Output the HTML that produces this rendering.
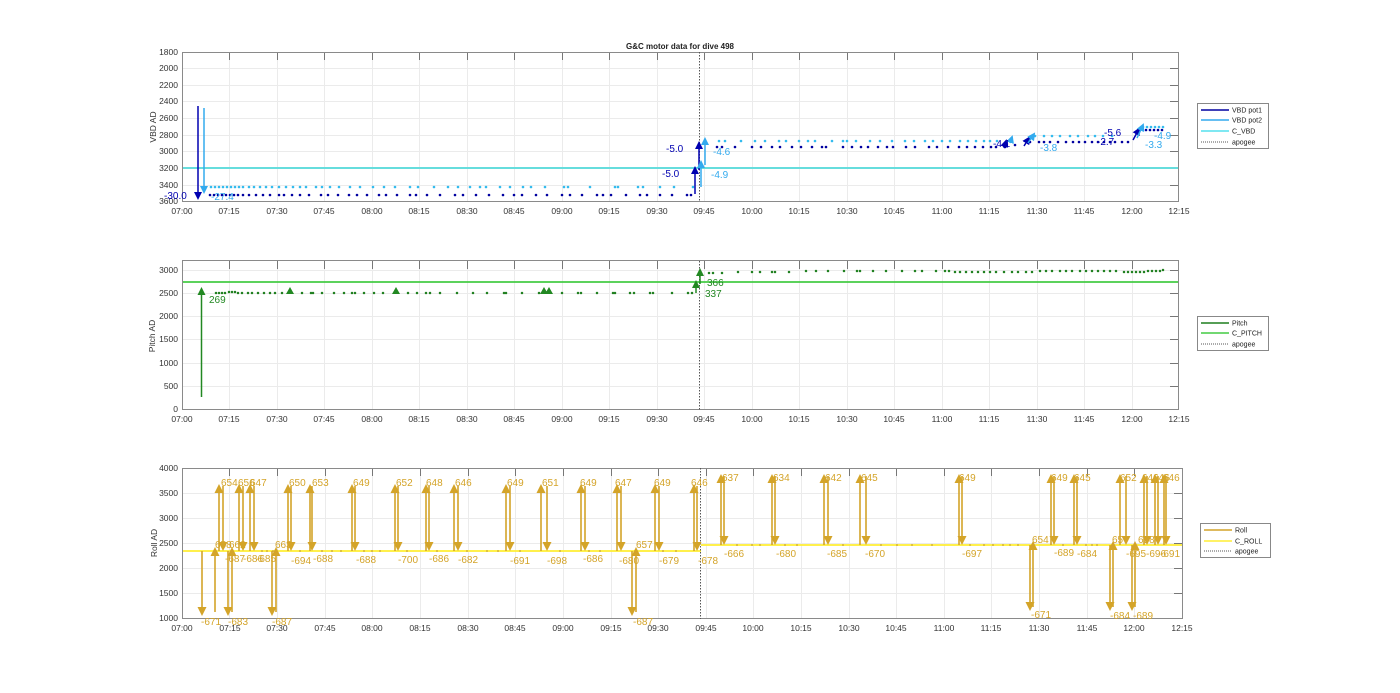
<!DOCTYPE html>
<html><head><meta charset="utf-8"><style>
html,body{margin:0;padding:0;background:#fff;width:1400px;height:693px;overflow:hidden}
svg{display:block;font-family:"Liberation Sans",sans-serif}
.t{font-size:8.5px;fill:#333}
.g{stroke:#ebebeb;stroke-width:1}
.bx{fill:none;stroke:#8a8a8a;stroke-width:1}
.tk{stroke:#777;stroke-width:1;fill:none}
</style></head><body>
<svg width="1400" height="693" viewBox="0 0 1400 693" xmlns="http://www.w3.org/2000/svg">
<defs>
<marker id="ab" markerWidth="8" markerHeight="8" refX="6" refY="4" orient="auto" markerUnits="userSpaceOnUse"><path d="M0,0 L8,4 L0,8 z" fill="#0000b0"/></marker>
<marker id="al" markerWidth="8" markerHeight="8" refX="6" refY="4" orient="auto" markerUnits="userSpaceOnUse"><path d="M0,0 L8,4 L0,8 z" fill="#33aaee"/></marker>
<marker id="ag" markerWidth="8" markerHeight="8" refX="6" refY="4" orient="auto" markerUnits="userSpaceOnUse"><path d="M0,0 L8,4 L0,8 z" fill="#228822"/></marker>
<marker id="ar" markerWidth="9" markerHeight="9" refX="7" refY="4.5" orient="auto" markerUnits="userSpaceOnUse"><path d="M0,0 L9,4.5 L0,9 z" fill="#d4a429"/></marker>
</defs>

<!-- ===== TOP PLOT ===== -->
<text x="680" y="49" text-anchor="middle" style="font-size:8px;font-weight:bold" fill="#222">G&amp;C motor data for dive 498</text>
<g class="g">
<path d="M229.5 52V202M277.5 52V202M324.5 52V202M372.5 52V202M419.5 52V202M467.5 52V202M514.5 52V202M562.5 52V202M609.5 52V202M657.5 52V202M704.5 52V202M752.5 52V202M799.5 52V202M847.5 52V202M894.5 52V202M942.5 52V202M989.5 52V202M1037.5 52V202M1084.5 52V202M1132.5 52V202"/>
<path d="M182 68.5H1179M182 85.5H1179M182 101.5H1179M182 118.5H1179M182 135.5H1179M182 151.5H1179M182 168.5H1179M182 185.5H1179"/>
</g>
<path class="tk" d="M229.5 52v8M277.5 52v8M324.5 52v8M372.5 52v8M419.5 52v8M467.5 52v8M514.5 52v8M562.5 52v8M609.5 52v8M657.5 52v8M704.5 52v8M752.5 52v8M799.5 52v8M847.5 52v8M894.5 52v8M942.5 52v8M989.5 52v8M1037.5 52v8M1084.5 52v8M1132.5 52v8M1170 68.5h9M1170 85.5h9M1170 101.5h9M1170 118.5h9M1170 135.5h9M1170 151.5h9M1170 168.5h9M1170 185.5h9"/>
<line x1="182" y1="168" x2="1179" y2="168" stroke="#66dddd" stroke-width="2"/>
<rect class="bx" x="182.5" y="52.5" width="996" height="149"/>
<g class="t" text-anchor="end">
<text x="178" y="55">1800</text><text x="178" y="71">2000</text><text x="178" y="88">2200</text><text x="178" y="104">2400</text><text x="178" y="121">2600</text><text x="178" y="138">2800</text><text x="178" y="154">3000</text><text x="178" y="171">3200</text><text x="178" y="188">3400</text><text x="178" y="204">3600</text>
</g>
<text class="t" transform="translate(156,127) rotate(-90)" text-anchor="middle">VBD AD</text>
<g class="t" text-anchor="middle">
<text x="182" y="214">07:00</text><text x="229" y="214">07:15</text><text x="277" y="214">07:30</text><text x="324" y="214">07:45</text><text x="372" y="214">08:00</text><text x="419" y="214">08:15</text><text x="467" y="214">08:30</text><text x="514" y="214">08:45</text><text x="562" y="214">09:00</text><text x="609" y="214">09:15</text><text x="657" y="214">09:30</text><text x="704" y="214">09:45</text><text x="752" y="214">10:00</text><text x="799" y="214">10:15</text><text x="847" y="214">10:30</text><text x="894" y="214">10:45</text><text x="942" y="214">11:00</text><text x="989" y="214">11:15</text><text x="1037" y="214">11:30</text><text x="1084" y="214">11:45</text><text x="1132" y="214">12:00</text><text x="1179" y="214">12:15</text>
</g>
<path stroke="#33bbee" stroke-width="2.6" stroke-linecap="round" fill="none" d="M211 187h0M215 187h0M219 187h0M223 187h0M227 187h0M231 187h0M235 187h0M239 187h0M243 187h0M249 187h0M254 187h0M260 187h0M266 187h0M272 187h0M279 187h0M286 187h0M293 187h0M300 187h0M306 187h0M316 187h0M322 187h0M330 187h0M339 187h0M350 187h0M360 187h0M373 187h0M384 187h0M395 187h0M410 187h0M418 187h0M434 187h0M448 187h0M458 187h0M470 187h0M480 187h0M486 187h0M500 187h0M510 187h0M523 187h0M531 187h0M545 187h0M564 187h0M568 187h0M590 187h0M615 187h0M618 187h0M638 187h0M643 187h0M660 187h0M674 187h0M693 187h0M719 141h0M725 141h0M741 141h0M755 141h0M765 141h0M779 141h0M786 141h0M799 141h0M808 141h0M815 141h0M832 141h0M843 141h0M847 141h0M856 141h0M870 141h0M880 141h0M892 141h0M905 141h0M914 141h0M925 141h0M933 141h0M942 141h0M950 141h0M960 141h0M968 141h0M976 141h0M984 141h0M990 141h0M997 141h0M1010 141h0M1035 136h0M1044 136h0M1052 136h0M1060 136h0M1070 136h0M1078 136h0M1088 136h0M1095 136h0M1103 136h0M1112 136h0M1143 127h0M1147 127h0M1151 127h0M1155 127h0M1159 127h0M1163 127h0"/>
<path stroke="#0000a0" stroke-width="2.6" stroke-linecap="round" fill="none" d="M210 195h0M214 195h0M218 195h0M222 195h0M226 195h0M230 195h0M234 195h0M238 195h0M243 195h0M249 195h0M256 195h0M263 195h0M270 195h0M279 195h0M284 195h0M292 195h0M300 195h0M309 195h0M321 195h0M328 195h0M338 195h0M349 195h0M357 195h0M367 195h0M379 195h0M386 195h0M397 195h0M410 195h0M416 195h0M427 195h0M440 195h0M455 195h0M463 195h0M476 195h0M489 195h0M503 195h0M514 195h0M522 195h0M536 195h0M547 195h0M562 195h0M570 195h0M582 195h0M597 195h0M603 195h0M611 195h0M626 195h0M640 195h0M647 195h0M660 195h0M672 195h0M687 195h0M691 195h0M717 147h0M722 147h0M735 147h0M752 147h0M761 147h0M772 147h0M780 147h0M792 147h0M801 147h0M812 147h0M822 147h0M826 147h0M843 147h0M852 147h0M861 147h0M868 147h0M878 147h0M887 147h0M893 147h0M906 147h0M915 147h0M929 147h0M937 147h0M948 147h0M959 147h0M967 147h0M975 147h0M983 147h0M991 147h0M996 147h0M1005 147h0M1015 145h0M1030 142h0M1039 142h0M1044 142h0M1050 142h0M1058 142h0M1066 142h0M1073 142h0M1079 142h0M1085 142h0M1092 142h0M1098 142h0M1104 142h0M1110 142h0M1115 142h0M1122 142h0M1128 142h0M1146 130h0M1150 130h0M1154 130h0M1158 130h0M1162 130h0"/>
<line x1="699.5" y1="52" x2="699.5" y2="202" stroke="#555" stroke-dasharray="1.5,1.5"/>
<line x1="198" y1="106" x2="198" y2="198" stroke="#0000b0" stroke-width="1.5" marker-end="url(#ab)"/>
<line x1="204" y1="108" x2="204" y2="192" stroke="#33aaee" stroke-width="1.5" marker-end="url(#al)"/>
<line x1="695" y1="194" x2="695" y2="168" stroke="#0000b0" stroke-width="1.5" marker-end="url(#ab)"/>
<line x1="699" y1="170" x2="699" y2="143" stroke="#0000b0" stroke-width="1.5" marker-end="url(#ab)"/>
<line x1="701" y1="187" x2="701" y2="162" stroke="#33aaee" stroke-width="1.5" marker-end="url(#al)"/>
<line x1="705" y1="165" x2="705" y2="139" stroke="#33aaee" stroke-width="1.5" marker-end="url(#al)"/>
<line x1="1004" y1="148" x2="1006" y2="141" stroke="#0000b0" stroke-width="1.5" marker-end="url(#ab)"/>
<line x1="1024" y1="146" x2="1029" y2="138" stroke="#0000b0" stroke-width="1.5" marker-end="url(#ab)"/>
<line x1="1028" y1="143" x2="1034" y2="134" stroke="#33aaee" stroke-width="1.5" marker-end="url(#al)"/>
<line x1="1010" y1="143" x2="1012" y2="137" stroke="#33aaee" stroke-width="1.5" marker-end="url(#al)"/>
<line x1="1133" y1="140" x2="1139" y2="129" stroke="#0000b0" stroke-width="1.5" marker-end="url(#ab)"/>
<line x1="1137" y1="138" x2="1143" y2="125" stroke="#33aaee" stroke-width="1.5" marker-end="url(#al)"/>
<g style="font-size:10px">
<text x="164" y="199" fill="#0000b0">-30.0</text><text x="211" y="200" fill="#33aaee">-27.4</text>
<text x="666" y="152" fill="#0000b0">-5.0</text><text x="662" y="177" fill="#0000b0">-5.0</text>
<text x="713" y="155" fill="#33aaee">-4.6</text><text x="711" y="178" fill="#33aaee">-4.9</text>
<text x="993" y="147" fill="#0000b0">-4.1</text><text x="1040" y="151" fill="#33aaee">-3.8</text>
<text x="1104" y="136" fill="#0000b0">-5.6</text><text x="1097" y="145" fill="#0000b0">-2.7</text>
<text x="1154" y="139" fill="#33aaee">-4.9</text><text x="1145" y="148" fill="#33aaee">-3.3</text>
</g>
<rect x="1197.5" y="103.5" width="71" height="45" fill="#fff" stroke="#888"/>
<g style="font-size:7px" fill="#222">
<line x1="1201" y1="110" x2="1229" y2="110" stroke="#0000a0" stroke-width="1.6"/><text x="1232" y="112.5">VBD pot1</text>
<line x1="1201" y1="120" x2="1229" y2="120" stroke="#33aaee" stroke-width="1.6"/><text x="1232" y="122.5">VBD pot2</text>
<line x1="1201" y1="131" x2="1229" y2="131" stroke="#55e0ee" stroke-width="1.6"/><text x="1232" y="133.5">C_VBD</text>
<line x1="1201" y1="142" x2="1229" y2="142" stroke="#555" stroke-dasharray="1,1"/><text x="1232" y="144.5">apogee</text>
</g>

<!-- ===== MIDDLE PLOT ===== -->
<g class="g">
<path d="M229.5 261V410M277.5 261V410M324.5 261V410M372.5 261V410M419.5 261V410M467.5 261V410M514.5 261V410M562.5 261V410M609.5 261V410M657.5 261V410M704.5 261V410M752.5 261V410M799.5 261V410M847.5 261V410M894.5 261V410M942.5 261V410M989.5 261V410M1037.5 261V410M1084.5 261V410M1132.5 261V410"/>
<path d="M182 270.5H1179M182 293.5H1179M182 316.5H1179M182 339.5H1179M182 363.5H1179M182 386.5H1179"/>
</g>
<path class="tk" d="M229.5 261v8M277.5 261v8M324.5 261v8M372.5 261v8M419.5 261v8M467.5 261v8M514.5 261v8M562.5 261v8M609.5 261v8M657.5 261v8M704.5 261v8M752.5 261v8M799.5 261v8M847.5 261v8M894.5 261v8M942.5 261v8M989.5 261v8M1037.5 261v8M1084.5 261v8M1132.5 261v8M1170 270.5h9M1170 293.5h9M1170 316.5h9M1170 339.5h9M1170 363.5h9M1170 386.5h9"/>
<line x1="182" y1="282" x2="1179" y2="282" stroke="#44cc44" stroke-width="1.8"/>
<rect class="bx" x="182.5" y="260.5" width="996" height="149"/>
<g class="t" text-anchor="end">
<text x="178" y="273">3000</text><text x="178" y="296">2500</text><text x="178" y="319">2000</text><text x="178" y="342">1500</text><text x="178" y="366">1000</text><text x="178" y="389">500</text><text x="178" y="412">0</text>
</g>
<text class="t" transform="translate(155,336) rotate(-90)" text-anchor="middle">Pitch AD</text>
<g class="t" text-anchor="middle">
<text x="182" y="422">07:00</text><text x="229" y="422">07:15</text><text x="277" y="422">07:30</text><text x="324" y="422">07:45</text><text x="372" y="422">08:00</text><text x="419" y="422">08:15</text><text x="467" y="422">08:30</text><text x="514" y="422">08:45</text><text x="562" y="422">09:00</text><text x="609" y="422">09:15</text><text x="657" y="422">09:30</text><text x="704" y="422">09:45</text><text x="752" y="422">10:00</text><text x="799" y="422">10:15</text><text x="847" y="422">10:30</text><text x="894" y="422">10:45</text><text x="942" y="422">11:00</text><text x="989" y="422">11:15</text><text x="1037" y="422">11:30</text><text x="1084" y="422">11:45</text><text x="1132" y="422">12:00</text><text x="1179" y="422">12:15</text>
</g>
<path stroke="#1f7f1f" stroke-width="2.5" stroke-linecap="round" fill="none" d="M216 293h0M219 293h0M222 293h0M225 293h0M229 292h0M232 292h0M235 292h0M238 293h0M242 293h0M248 293h0M252 293h0M258 293h0M264 293h0M270 293h0M275 293h0M282 293h0M302 293h0M311 293h0M313 293h0M322 293h0M334 293h0M344 293h0M352 293h0M355 293h0M364 293h0M374 293h0M383 293h0M408 293h0M417 293h0M426 293h0M430 293h0M440 293h0M457 293h0M473 293h0M487 293h0M504 293h0M506 293h0M522 293h0M539 293h0M562 293h0M578 293h0M581 293h0M597 293h0M613 293h0M615 293h0M630 293h0M634 293h0M650 293h0M653 293h0M672 293h0M688 293h0M692 293h0M709 273h0M713 273h0M722 273h0M738 272h0M752 272h0M760 272h0M772 272h0M775 272h0M789 272h0M806 271h0M816 271h0M828 271h0M844 271h0M857 271h0M860 271h0M873 271h0M886 271h0M902 271h0M915 271h0M922 271h0M936 271h0M945 271h0M949 271h0M955 272h0M960 272h0M966 272h0M972 272h0M978 272h0M984 272h0M990 272h0M996 272h0M1004 272h0M1012 272h0M1018 272h0M1026 272h0M1032 272h0M1040 271h0M1046 271h0M1052 271h0M1060 271h0M1066 271h0M1072 271h0M1080 271h0M1086 271h0M1092 271h0M1098 271h0M1104 271h0M1110 271h0M1116 271h0M1124 272h0M1128 272h0M1132 272h0M1136 272h0M1140 272h0M1144 272h0M1148 271h0M1152 271h0M1156 271h0M1160 271h0M1163 270h0"/>
<line x1="699.5" y1="261" x2="699.5" y2="410" stroke="#555" stroke-dasharray="1.5,1.5"/>
<line x1="201.5" y1="397" x2="201.5" y2="289" stroke="#228822" stroke-width="1.5" marker-end="url(#ag)"/>
<line x1="696" y1="293" x2="696" y2="282" stroke="#228822" stroke-width="1.5" marker-end="url(#ag)"/>
<line x1="700" y1="284" x2="700" y2="270" stroke="#228822" stroke-width="1.5" marker-end="url(#ag)"/>
<path fill="#228822" d="M286 294l4-7 4 7zM392 294l4-7 4 7zM540 294l4-7 4 7zM545 294l4-7 4 7z"/>
<g style="font-size:10px" fill="#228822">
<text x="209" y="303">269</text><text x="707" y="286">366</text><text x="705" y="297">337</text>
</g>
<rect x="1197.5" y="316.5" width="71" height="34" fill="#fff" stroke="#888"/>
<g style="font-size:7px" fill="#222">
<line x1="1201" y1="323" x2="1229" y2="323" stroke="#1f7f1f" stroke-width="1.6"/><text x="1232" y="325.5">Pitch</text>
<line x1="1201" y1="333" x2="1229" y2="333" stroke="#44cc44" stroke-width="1.6"/><text x="1232" y="335.5">C_PITCH</text>
<line x1="1201" y1="344" x2="1229" y2="344" stroke="#555" stroke-dasharray="1,1"/><text x="1232" y="346.5">apogee</text>
</g>

<!-- ===== BOTTOM PLOT ===== -->
<g class="g">
<path d="M229.5 468V619M277.5 468V619M325.5 468V619M372.5 468V619M420.5 468V619M468.5 468V619M515.5 468V619M563.5 468V619M611.5 468V619M658.5 468V619M706.5 468V619M753.5 468V619M801.5 468V619M849.5 468V619M896.5 468V619M944.5 468V619M991.5 468V619M1039.5 468V619M1087.5 468V619M1134.5 468V619"/>
<path d="M182 493.5H1183M182 518.5H1183M182 543.5H1183M182 568.5H1183M182 593.5H1183"/>
</g>
<path class="tk" d="M229.5 468v8M277.5 468v8M325.5 468v8M372.5 468v8M420.5 468v8M468.5 468v8M515.5 468v8M563.5 468v8M611.5 468v8M658.5 468v8M706.5 468v8M753.5 468v8M801.5 468v8M849.5 468v8M896.5 468v8M944.5 468v8M991.5 468v8M1039.5 468v8M1087.5 468v8M1134.5 468v8M1174 493.5h9M1174 518.5h9M1174 543.5h9M1174 568.5h9M1174 593.5h9"/>
<line x1="182" y1="551" x2="701" y2="551" stroke="#ffee33" stroke-width="1.8"/>
<line x1="701" y1="545" x2="1183" y2="545" stroke="#ffee33" stroke-width="1.8"/>
<rect class="bx" x="182.5" y="468.5" width="1000" height="150"/>
<g class="t" text-anchor="end">
<text x="178" y="471">4000</text><text x="178" y="496">3500</text><text x="178" y="521">3000</text><text x="178" y="546">2500</text><text x="178" y="571">2000</text><text x="178" y="596">1500</text><text x="178" y="621">1000</text>
</g>
<text class="t" transform="translate(157,543) rotate(-90)" text-anchor="middle">Roll AD</text>
<g class="t" text-anchor="middle">
<text x="182" y="631">07:00</text><text x="230" y="631">07:15</text><text x="277" y="631">07:30</text><text x="325" y="631">07:45</text><text x="372" y="631">08:00</text><text x="420" y="631">08:15</text><text x="468" y="631">08:30</text><text x="515" y="631">08:45</text><text x="563" y="631">09:00</text><text x="611" y="631">09:15</text><text x="658" y="631">09:30</text><text x="706" y="631">09:45</text><text x="753" y="631">10:00</text><text x="801" y="631">10:15</text><text x="849" y="631">10:30</text><text x="896" y="631">10:45</text><text x="944" y="631">11:00</text><text x="991" y="631">11:15</text><text x="1039" y="631">11:30</text><text x="1087" y="631">11:45</text><text x="1134" y="631">12:00</text><text x="1182" y="631">12:15</text>
</g>
<path stroke="#c9a02a" stroke-width="1.8" stroke-linecap="round" fill="none" d="M262 551h0M267 551h0M273 551h0M300 551h0M322 551h0M332 551h0M341 551h0M364 551h0M372 551h0M380 551h0M407 551h0M437 551h0M467 551h0M487 551h0M498 551h0M520 551h0M560 551h0M589 551h0M600 551h0M663 551h0M676 551h0M737 545h0M752 545h0M760 545h0M785 545h0M797 545h0M843 545h0M881 545h0M897 545h0M912 545h0M932 545h0M970 545h0M984 545h0M993 545h0M1003 545h0M1010 545h0M1018 545h0M1063 545h0M1086 545h0M1092 545h0M1097 545h0"/>
<line x1="700.5" y1="468" x2="700.5" y2="619" stroke="#555" stroke-dasharray="1.5,1.5"/>
<g stroke="#d4a429" stroke-width="1.6" fill="none">
<line x1="219" y1="551" x2="219" y2="486" marker-end="url(#ar)"/><line x1="223" y1="486" x2="223" y2="549" marker-end="url(#ar)"/>
<line x1="239" y1="551" x2="239" y2="486" marker-end="url(#ar)"/><line x1="243" y1="486" x2="243" y2="549" marker-end="url(#ar)"/>
<line x1="250" y1="551" x2="250" y2="486" marker-end="url(#ar)"/><line x1="254" y1="486" x2="254" y2="549" marker-end="url(#ar)"/>
<line x1="288" y1="551" x2="288" y2="486" marker-end="url(#ar)"/><line x1="291" y1="486" x2="291" y2="549" marker-end="url(#ar)"/>
<line x1="310" y1="551" x2="310" y2="486" marker-end="url(#ar)"/><line x1="312" y1="486" x2="312" y2="549" marker-end="url(#ar)"/>
<line x1="352" y1="551" x2="352" y2="486" marker-end="url(#ar)"/><line x1="355" y1="486" x2="355" y2="549" marker-end="url(#ar)"/>
<line x1="395" y1="551" x2="395" y2="486" marker-end="url(#ar)"/><line x1="398" y1="486" x2="398" y2="549" marker-end="url(#ar)"/>
<line x1="426" y1="551" x2="426" y2="486" marker-end="url(#ar)"/><line x1="429" y1="486" x2="429" y2="549" marker-end="url(#ar)"/>
<line x1="454" y1="551" x2="454" y2="486" marker-end="url(#ar)"/><line x1="458" y1="486" x2="458" y2="549" marker-end="url(#ar)"/>
<line x1="506" y1="551" x2="506" y2="486" marker-end="url(#ar)"/><line x1="510" y1="486" x2="510" y2="549" marker-end="url(#ar)"/>
<line x1="541" y1="551" x2="541" y2="486" marker-end="url(#ar)"/><line x1="547" y1="486" x2="547" y2="549" marker-end="url(#ar)"/>
<line x1="581" y1="551" x2="581" y2="486" marker-end="url(#ar)"/><line x1="585" y1="486" x2="585" y2="549" marker-end="url(#ar)"/>
<line x1="617" y1="551" x2="617" y2="486" marker-end="url(#ar)"/><line x1="621" y1="486" x2="621" y2="549" marker-end="url(#ar)"/>
<line x1="655" y1="551" x2="655" y2="486" marker-end="url(#ar)"/><line x1="659" y1="486" x2="659" y2="549" marker-end="url(#ar)"/>
<line x1="694" y1="551" x2="694" y2="486" marker-end="url(#ar)"/><line x1="697" y1="486" x2="697" y2="549" marker-end="url(#ar)"/>
<line x1="721" y1="545" x2="721" y2="476" marker-end="url(#ar)"/><line x1="724" y1="476" x2="724" y2="543" marker-end="url(#ar)"/>
<line x1="772" y1="545" x2="772" y2="476" marker-end="url(#ar)"/><line x1="775" y1="476" x2="775" y2="543" marker-end="url(#ar)"/>
<line x1="824" y1="545" x2="824" y2="476" marker-end="url(#ar)"/><line x1="828" y1="476" x2="828" y2="543" marker-end="url(#ar)"/>
<line x1="860" y1="545" x2="860" y2="476" marker-end="url(#ar)"/><line x1="866" y1="476" x2="866" y2="543" marker-end="url(#ar)"/>
<line x1="959" y1="545" x2="959" y2="476" marker-end="url(#ar)"/><line x1="962" y1="476" x2="962" y2="543" marker-end="url(#ar)"/>
<line x1="1051" y1="545" x2="1051" y2="476" marker-end="url(#ar)"/><line x1="1054" y1="476" x2="1054" y2="543" marker-end="url(#ar)"/>
<line x1="1074" y1="545" x2="1074" y2="476" marker-end="url(#ar)"/><line x1="1077" y1="476" x2="1077" y2="543" marker-end="url(#ar)"/>
<line x1="1120" y1="545" x2="1120" y2="476" marker-end="url(#ar)"/><line x1="1126" y1="476" x2="1126" y2="543" marker-end="url(#ar)"/>
<line x1="1144" y1="545" x2="1144" y2="476" marker-end="url(#ar)"/><line x1="1147" y1="476" x2="1147" y2="543" marker-end="url(#ar)"/>
<line x1="1155" y1="545" x2="1155" y2="476" marker-end="url(#ar)"/><line x1="1158" y1="476" x2="1158" y2="543" marker-end="url(#ar)"/>
<line x1="1164" y1="545" x2="1164" y2="476" marker-end="url(#ar)"/><line x1="1166" y1="476" x2="1166" y2="543" marker-end="url(#ar)"/>
<line x1="202" y1="551" x2="202" y2="614" marker-end="url(#ar)"/><line x1="215" y1="612" x2="215" y2="549" marker-end="url(#ar)"/>
<line x1="228" y1="551" x2="228" y2="614" marker-end="url(#ar)"/><line x1="232" y1="612" x2="232" y2="549" marker-end="url(#ar)"/>
<line x1="272" y1="551" x2="272" y2="614" marker-end="url(#ar)"/><line x1="276" y1="612" x2="276" y2="549" marker-end="url(#ar)"/>
<line x1="632" y1="551" x2="632" y2="614" marker-end="url(#ar)"/><line x1="636" y1="612" x2="636" y2="549" marker-end="url(#ar)"/>
<line x1="1030" y1="545" x2="1030" y2="609" marker-end="url(#ar)"/><line x1="1033" y1="607" x2="1033" y2="543" marker-end="url(#ar)"/>
<line x1="1110" y1="545" x2="1110" y2="609" marker-end="url(#ar)"/><line x1="1113" y1="607" x2="1113" y2="543" marker-end="url(#ar)"/>
<line x1="1132" y1="545" x2="1132" y2="609" marker-end="url(#ar)"/><line x1="1135" y1="607" x2="1135" y2="543" marker-end="url(#ar)"/>
</g>
<g style="font-size:10px" fill="#d4a429">
<text x="221" y="486">654</text><text x="238" y="486">656</text><text x="250" y="486">647</text><text x="289" y="486">650</text><text x="312" y="486">653</text><text x="353" y="486">649</text><text x="396" y="486">652</text><text x="426" y="486">648</text><text x="455" y="486">646</text><text x="507" y="486">649</text><text x="542" y="486">651</text><text x="580" y="486">649</text><text x="615" y="486">647</text><text x="654" y="486">649</text><text x="691" y="486">646</text><text x="722" y="481">637</text><text x="773" y="481">634</text><text x="825" y="481">642</text><text x="861" y="481">645</text><text x="959" y="481">649</text><text x="1051" y="481">649</text><text x="1074" y="481">645</text><text x="1120" y="481">652</text><text x="1142" y="481">646</text><text x="1153" y="481">646</text><text x="1163" y="481">646</text>
<text x="215" y="548">658</text><text x="229" y="548">662</text><text x="275" y="548">663</text><text x="636" y="548">657</text><text x="1032" y="543">654</text><text x="1112" y="543">657</text><text x="1138" y="543">658</text>
<text x="225" y="562">-687</text><text x="243" y="562">-686</text><text x="256" y="562">-685</text><text x="291" y="564">-694</text><text x="313" y="562">-688</text><text x="356" y="563">-688</text><text x="398" y="563">-700</text><text x="429" y="562">-686</text><text x="458" y="563">-682</text><text x="510" y="564">-691</text><text x="547" y="564">-698</text><text x="583" y="562">-686</text><text x="619" y="564">-680</text><text x="659" y="564">-679</text><text x="698" y="564">-678</text><text x="724" y="557">-666</text><text x="776" y="557">-680</text><text x="827" y="557">-685</text><text x="865" y="557">-670</text><text x="962" y="557">-697</text><text x="1054" y="556">-689</text><text x="1077" y="557">-684</text><text x="1126" y="557">-695</text><text x="1146" y="557">-696</text><text x="1160" y="557">-691</text>
<text x="201" y="625">-671</text><text x="228" y="625">-683</text><text x="272" y="625">-687</text><text x="633" y="625">-687</text><text x="1031" y="618">-671</text><text x="1110" y="619">-684</text><text x="1133" y="619">-689</text>
</g>
<rect x="1200.5" y="523.5" width="70" height="34" fill="#fff" stroke="#888"/>
<g style="font-size:7px" fill="#222">
<line x1="1204" y1="530" x2="1232" y2="530" stroke="#d4a429" stroke-width="1.6"/><text x="1235" y="532.5">Roll</text>
<line x1="1204" y1="541" x2="1232" y2="541" stroke="#ffee33" stroke-width="1.6"/><text x="1235" y="543.5">C_ROLL</text>
<line x1="1204" y1="551" x2="1232" y2="551" stroke="#555" stroke-dasharray="1,1"/><text x="1235" y="553.5">apogee</text>
</g>
</svg>
</body></html>
